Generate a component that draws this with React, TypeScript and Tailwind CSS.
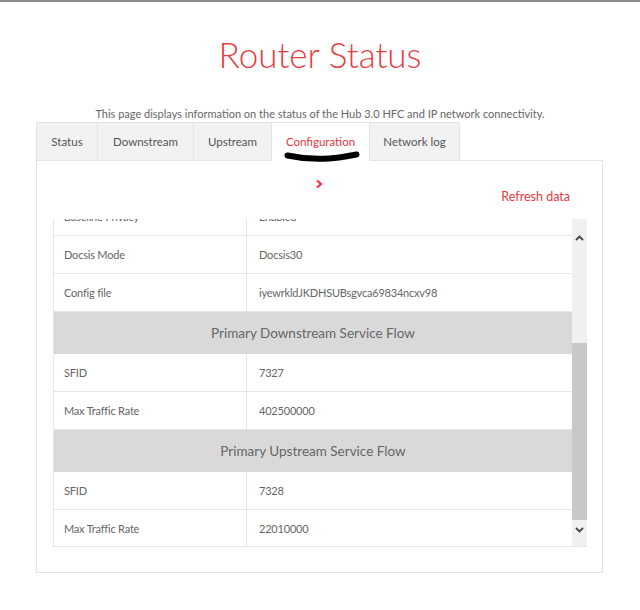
import React from "react";

const rowsTop = [
  { k: "Baseline Privacy", v: "Enabled" },
  { k: "Docsis Mode", v: "Docsis30" },
  { k: "Config file", v: "iyewrkldJKDHSUBsgvca69834ncxv98" },
];

function Row({ k, v }: { k: string; v: string }) {
  return (
    <div className="flex h-[38px] border-b border-[#e6e6e6] bg-white text-[11px] tracking-[-0.2px] text-[#666]">
      <div className="flex w-[193px] items-center border-r border-[#e6e6e6] pl-[10px] pt-[2px]">{k}</div>
      <div className="flex flex-1 items-center pl-[12px] pt-[2px]">{v}</div>
    </div>
  );
}

function Header({ t }: { t: string }) {
  return (
    <div className="flex h-[42px] items-center justify-center bg-[#d9d9d9] text-[13.5px] text-[#666]">{t}</div>
  );
}

export default function App() {
  const tabs = ["Status", "Downstream", "Upstream", "Configuration", "Network log"];
  const widths = ["w-[62px]", "w-[96px]", "w-[78px]", "w-[98px]", "w-[90px]"];
  return (
    <div
      className="relative h-[610px] w-[640px] overflow-hidden bg-white"
      style={{ fontFamily: 'Lato, "Open Sans", "Liberation Sans", sans-serif' }}
    >
      <div className="h-[2px] w-full bg-[#8a8a8a]" />
      <div className="pt-[30px] text-center text-[35px] font-light leading-[44px] text-[#ea3c40]">Router Status</div>
      <div className="mt-[30px] text-center text-[11px] leading-[16px] text-[#666]">
        This page displays information on the status of the Hub 3.0 HFC and IP network connectivity.
      </div>
      <div className="ml-[36px] w-[567px]">
        <div className="flex h-[39px]">
          {tabs.map((t, i) => {
            const active = i === 3;
            return (
              <div
                key={t}
                className={
                  widths[i] +
                  " relative flex items-center justify-center border-t border-r border-[#e3e3e3] text-[11.5px] " +
                  (i === 0 ? "border-l " : "") +
                  (active ? "bg-white text-[#e8383d]" : "border-b bg-[#f2f2f2] text-[#555]")
                }
              >
                {t}
                {active && (
                  <svg className="absolute left-[12px] top-[28px]" width="76" height="11" viewBox="0 0 76 11">
                    <path
                      d="M3.5 4.5 C 15 7, 30 8.5, 45 7.5 C 55 7, 65 5, 72.5 3.5"
                      stroke="#000"
                      strokeWidth="6"
                      strokeLinecap="round"
                      fill="none"
                    />
                  </svg>
                )}
              </div>
            );
          })}
          <div className="flex-1 border-b border-[#e3e3e3]" />
        </div>
        <div className="h-[412px] border-x border-b border-[#e3e3e3] pl-[16px] pr-[15px]">
          <div className="flex justify-center pt-[18px]">
            <svg width="8" height="10" viewBox="0 0 8 10" className="ml-[-2px]">
              <path d="M2 1.5 L6 5 L2 8.5" stroke="#e8383d" strokeWidth="2.2" fill="none" />
            </svg>
          </div>
          <div className="flex justify-end pr-[17px] text-[12.5px] leading-[16px] text-[#e8383d]">Refresh data</div>
          <div className="mt-[14px] flex h-[328px] border-b border-[#e6e6e6]">
            <div className="h-full flex-1 overflow-hidden border-l border-[#e6e6e6]">
              <div className="mt-[-21px]">
                {rowsTop.map((r) => (
                  <Row key={r.k} {...r} />
                ))}
                <Header t="Primary Downstream Service Flow" />
                <Row k="SFID" v="7327" />
                <Row k="Max Traffic Rate" v="402500000" />
                <Header t="Primary Upstream Service Flow" />
                <Row k="SFID" v="7328" />
                <Row k="Max Traffic Rate" v="22010000" />
              </div>
            </div>
            <div className="flex w-[15px] flex-col bg-[#f0f0f0]">
              <div className="flex h-[124px] items-start justify-center pt-[16px]">
                <svg width="9" height="6" viewBox="0 0 9 6">
                  <path d="M1 5 L4.5 1.5 L8 5" stroke="#444" strokeWidth="1.8" fill="none" />
                </svg>
              </div>
              <div className="h-[177px] bg-[#c8c8c8]" />
              <div className="flex flex-1 items-start justify-center pt-[7px]">
                <svg width="9" height="6" viewBox="0 0 9 6">
                  <path d="M1 1 L4.5 4.5 L8 1" stroke="#444" strokeWidth="1.8" fill="none" />
                </svg>
              </div>
            </div>
          </div>
        </div>
      </div>
    </div>
  );
}
